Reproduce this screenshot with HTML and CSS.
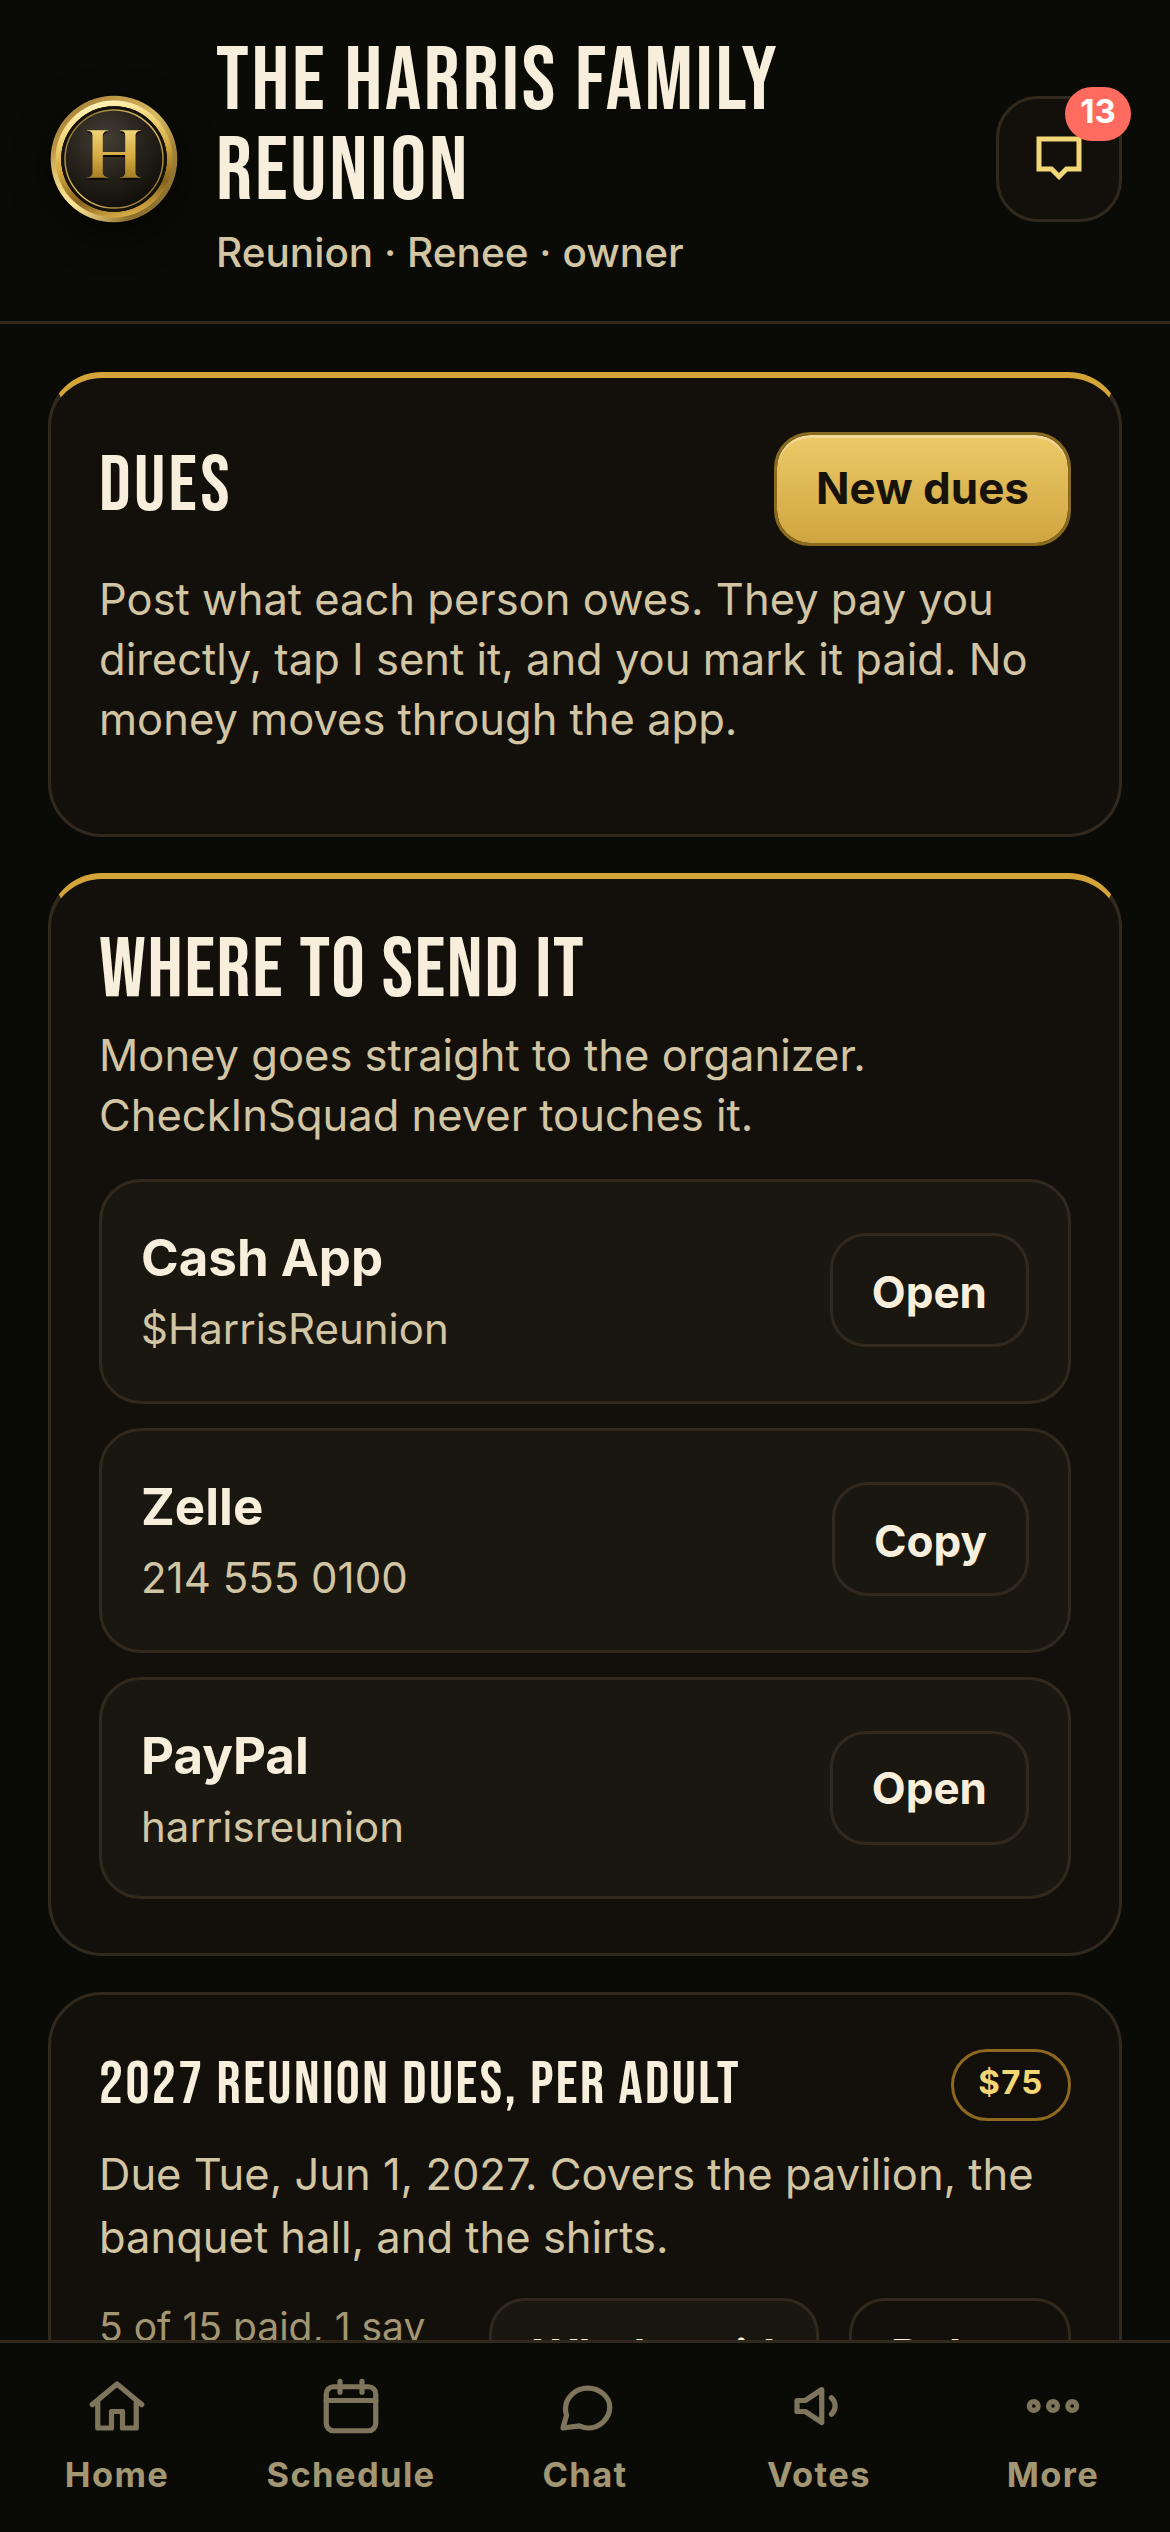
FILE: index.html
```html
<!DOCTYPE html>
<html lang="en">
<head>
<meta charset="utf-8">
<title>The Harris Family Reunion – Dues</title>
<link rel="stylesheet" href="styles.css">
</head>
<body>
<div class="app">
  <header class="topbar">
    <svg class="crest" viewBox="0 0 132 132" aria-hidden="true">
      <defs>
        <linearGradient id="rim" x1="0" y1="0" x2="0.9" y2="1">
          <stop offset="0.1" stop-color="#a57f35"/>
          <stop offset="0.35" stop-color="#c9a652"/>
          <stop offset="0.5" stop-color="#d8b964"/>
          <stop offset="0.7" stop-color="#a8873d"/>
          <stop offset="0.85" stop-color="#8f7230"/>
        </linearGradient>
        <radialGradient id="glint" cx="0.16" cy="0.85" r="0.45">
          <stop offset="0" stop-color="#fbe596"/>
          <stop offset="1" stop-color="#fbe596" stop-opacity="0"/>
        </radialGradient>
        <linearGradient id="band" x1="0.4" y1="0" x2="0.65" y2="1">
          <stop offset="0.02" stop-color="#fff0b4"/>
          <stop offset="0.25" stop-color="#f1d375"/>
          <stop offset="0.5" stop-color="#d3a63c"/>
          <stop offset="0.78" stop-color="#86621c"/>
          <stop offset="0.97" stop-color="#d6aa44"/>
        </linearGradient>
        <radialGradient id="disc" cx="0.42" cy="0.3" r="0.72">
          <stop offset="0" stop-color="#443f35"/>
          <stop offset="0.55" stop-color="#242019"/>
          <stop offset="1" stop-color="#0e0b07"/>
        </radialGradient>
        <linearGradient id="thin" x1="0" y1="0" x2="1" y2="1">
          <stop offset="0.1" stop-color="#8f712f"/>
          <stop offset="0.5" stop-color="#e8c964"/>
          <stop offset="0.9" stop-color="#8f712f"/>
        </linearGradient>
        <linearGradient id="letter" x1="0" y1="0" x2="0" y2="1">
          <stop offset="0.2" stop-color="#f2d679"/>
          <stop offset="0.5" stop-color="#d3a83f"/>
          <stop offset="0.8" stop-color="#94701f"/>
        </linearGradient>
      </defs>
      <circle cx="66" cy="66" r="63.3" fill="url(#rim)"/>
      <circle cx="66" cy="66" r="63.3" fill="url(#glint)"/>
      <circle cx="66" cy="66" r="58.5" fill="url(#band)"/>
      <circle cx="66" cy="66" r="52.8" fill="#16130d"/>
      <circle cx="66" cy="66" r="52.8" fill="url(#disc)"/>
      <circle cx="66" cy="66" r="51" fill="none" stroke="#15120c" stroke-width="3.4"/>
      <circle cx="66" cy="66" r="49" fill="none" stroke="url(#thin)" stroke-width="1.4"/>
      <text class="crest-letter" x="66" y="86.500" text-anchor="middle" fill="#0a0804">H</text>
      <text class="crest-letter" x="66" y="85" text-anchor="middle" fill="url(#letter)">H</text>
    </svg>
    <div class="heading">
      <h1 class="title">The Harris Family Reunion</h1>
      <p class="subtitle">Reunion · Renee · owner</p>
    </div>
    <button class="inbox" aria-label="Messages">
      <svg class="inbox-icon" viewBox="0 0 24 24"><path d="M4 4h16v12h-5l-3 3-3-3H4z"/></svg>
      <span class="badge">13</span>
    </button>
  </header>

  <main class="content">
    <section class="card card-accent">
      <div class="card-head dues-head">
        <h2 class="h-dues">Dues</h2>
        <button class="btn btn-gold">New dues</button>
      </div>
      <p class="copy">Post what each person owes. They pay you directly, tap I sent it, and you mark it paid. No money moves through the app.</p>
    </section>

    <section class="card card-accent">
      <h2 class="h-send">Where to send it</h2>
      <p class="copy">Money goes straight to the organizer. CheckInSquad never touches it.</p>
      <div class="methods">
        <div class="method">
          <div><div class="method-name">Cash App</div><div class="method-id">$HarrisReunion</div></div>
          <button class="btn">Open</button>
        </div>
        <div class="method">
          <div><div class="method-name">Zelle</div><div class="method-id">214 555 0100</div></div>
          <button class="btn">Copy</button>
        </div>
        <div class="method">
          <div><div class="method-name">PayPal</div><div class="method-id">harrisreunion</div></div>
          <button class="btn">Open</button>
        </div>
      </div>
    </section>

    <section class="card">
      <div class="card-head">
        <h3 class="h-item">2027 Reunion Dues, per adult</h3>
        <span class="pill">$75</span>
      </div>
      <p class="copy copy-item">Due Tue, Jun 1, 2027. Covers the pavilion, the banquet hall, and the shirts.</p>
      <div class="item-foot">
        <p class="status">5 of 15 paid, 1 say they sent it</p>
        <button class="btn btn-fill">Who's paid</button>
        <button class="btn">Delete</button>
      </div>
    </section>
  </main>

  <nav class="tabs">
    <a class="tab"><svg class="tab-icon" viewBox="0 0 24 24"><path d="M3 11.500 12 4l9 7.500M5 10.500V20h5v-6h4v6h5v-9.500"/></svg>Home</a>
    <a class="tab"><svg class="tab-icon" viewBox="0 0 24 24"><rect x="3" y="5" width="18" height="16" rx="2.600"/><path d="M3 10h18M8 3v4M16 3v4"/></svg>Schedule</a>
    <a class="tab"><svg class="tab-icon" viewBox="0 0 24 24"><path d="M21 12.400C21 16.500 17.400 20 13 20c-1.200 0-2.200-.4-3-.8L4 20l1.300-4.700C5 14.500 4.900 13.800 4.900 13 4.900 9 8.500 5.500 13 5.500s8 3.300 8 6.900z"/></svg>Chat</a>
    <a class="tab"><svg class="tab-icon" viewBox="0 0 24 24"><path d="M4 10v4h3l6 4V6l-6 4zM16.500 9a4 4 0 0 1 0 6"/></svg>Votes</a>
    <a class="tab"><svg class="tab-icon" viewBox="0 0 24 24"><circle cx="5" cy="12" r="1.600"/><circle cx="12" cy="12" r="1.600"/><circle cx="19" cy="12" r="1.600"/></svg>More</a>
  </nav>
</div>
</body>
</html>
```
FILE: styles.css
```css
:root {
  --bg: #0a0a06;
  --card: #13100b;
  --raised: #1a1710;
  --line: #32291e;
  --cream: #f7efdc;
  --sand: #d2c5a4;
  --muted: #a39673;
  --gold: #d4a439;
}

* { box-sizing: border-box; }

body, h1, h2, h3, p { margin: 0; }

body {
  background: var(--bg);
  color: var(--cream);
  font-family: Inter, "Liberation Sans", sans-serif;
}

.app {
  display: flex;
  flex-direction: column;
  height: 2532px;
  overflow: hidden;
}

.topbar {
  display: flex;
  flex: none;
  align-items: center;
  gap: 36px;
  height: 324px;
  padding: 0 48px 3px;
  border-bottom: 3px solid var(--line);
}

.crest {
  flex: none;
  width: 132px;
  height: 132px;
  filter: drop-shadow(0 12px 18px rgba(0, 0, 0, .6));
}

.crest-letter { font: 700 69px Cinzel, "Liberation Serif", serif; }

.heading { flex: 1; }

h1, h2, h3 {
  font-family: "Bebas Neue", Oswald, sans-serif;
  font-weight: 400;
  text-transform: uppercase;
}

.title {
  font-size: 90px;
  line-height: 90px;
  letter-spacing: 2.7px;
}

.subtitle {
  margin: 7px 0 1px;
  color: var(--sand);
  font-size: 40.5px;
  font-weight: 500;
  line-height: 57px;
}

.inbox {
  position: relative;
  display: grid;
  place-items: center;
  flex: none;
  width: 126px;
  height: 126px;
  padding: 0;
  background: var(--card);
  border: 3px solid var(--line);
  border-radius: 42px;
}

.inbox-icon {
  width: 60px;
  height: 60px;
  fill: none;
  stroke: #f3d675;
  stroke-width: 2;
}

.badge {
  position: absolute;
  top: -12px;
  right: -12px;
  width: 66px;
  height: 54px;
  border-radius: 27px;
  background: #ff6b5e;
  color: #fff;
  font: 700 33px/48px Inter, sans-serif;
  text-align: center;
}

.content {
  display: flex;
  flex: 1;
  flex-direction: column;
  gap: 36px;
  min-height: 0;
  overflow: hidden;
  padding: 48px 48px 0;
}

.card {
  flex: none;
  padding: 54px 48px;
  background: var(--card);
  border: 3px solid var(--line);
  border-radius: 54px;
}

.card-accent { border-top: 6px solid var(--gold); }

.card-head {
  display: flex;
  align-items: center;
  justify-content: space-between;
}

.dues-head { margin-bottom: 23px; }
.dues-head + .copy { margin-bottom: 31px; }

.h-dues {
  padding-bottom: 5px;
  font-size: 78px;
  line-height: 78px;
  letter-spacing: 3.3px;
}

.h-send {
  margin-bottom: 16px;
  font-size: 84px;
  line-height: 76px;
  letter-spacing: 1.68px;
}

.h-item {
  font-size: 60px;
  line-height: 60px;
  letter-spacing: 2.4px;
}

.copy {
  color: var(--sand);
  font-size: 43.5px;
  line-height: 60px;
}

.copy-item {
  margin-top: 22px;
  line-height: 63px;
}

.btn {
  flex: none;
  height: 114px;
  padding: 0 39px;
  background: transparent;
  border: 3px solid var(--line);
  border-radius: 36px;
  color: var(--cream);
  font: 700 44px/54px Inter, sans-serif;
}

.btn-gold {
  padding-bottom: 2px;
  background: linear-gradient(#edca68, #cfa540) padding-box;
  border-color: #8a6a1f;
  box-shadow: inset 0 3px 0 rgba(255, 255, 255, .3);
  color: #17130a;
}

.btn-fill {
  padding: 0 41px;
  background: var(--raised);
}

.methods {
  display: flex;
  flex-direction: column;
  gap: 24px;
  margin-top: 34px;
}

.method {
  display: flex;
  align-items: center;
  justify-content: space-between;
  height: 225px;
  padding: 0 39px;
  background: var(--raised);
  border: 3px solid var(--line);
  border-radius: 42px;
}

.method .btn {
  margin-bottom: 3px;
  padding-top: 3px;
}

.method:last-child {
  height: 222px;
}

.method:last-child > div { padding-top: 3px; }

.method:last-child .btn {
  margin-bottom: 0;
  padding-top: 0;
}

.method-name {
  font-size: 51px;
  font-weight: 700;
  line-height: 65px;
}

.method-id {
  margin-top: 9px;
  color: var(--sand);
  font-size: 42px;
  line-height: 60px;
}

.pill {
  width: 120px;
  height: 72px;
  border: 3px solid #8f6820;
  border-radius: 36px;
  color: #f3d675;
  font-size: 33px;
  font-weight: 700;
  letter-spacing: 1.3px;
  line-height: 61px;
  text-align: center;
}

.item-foot {
  display: flex;
  align-items: flex-start;
  gap: 30px;
  margin-top: 29px;
}

.status {
  flex: 1;
  color: var(--muted);
  font-size: 39px;
  line-height: 57px;
}

.tabs {
  display: grid;
  flex: none;
  grid-template-columns: repeat(5, 1fr);
  height: 192px;
  padding-top: 30px;
  border-top: 3px solid var(--line);
}

.tab {
  display: flex;
  flex-direction: column;
  align-items: center;
  gap: 15px;
  color: var(--muted);
  font-size: 34.5px;
  font-weight: 700;
  letter-spacing: 1.38px;
  line-height: 42px;
}

.tab-icon {
  width: 66px;
  height: 66px;
  fill: none;
  stroke: #7f745c;
  stroke-width: 1.9;
  stroke-linecap: round;
  stroke-linejoin: round;
}
```
